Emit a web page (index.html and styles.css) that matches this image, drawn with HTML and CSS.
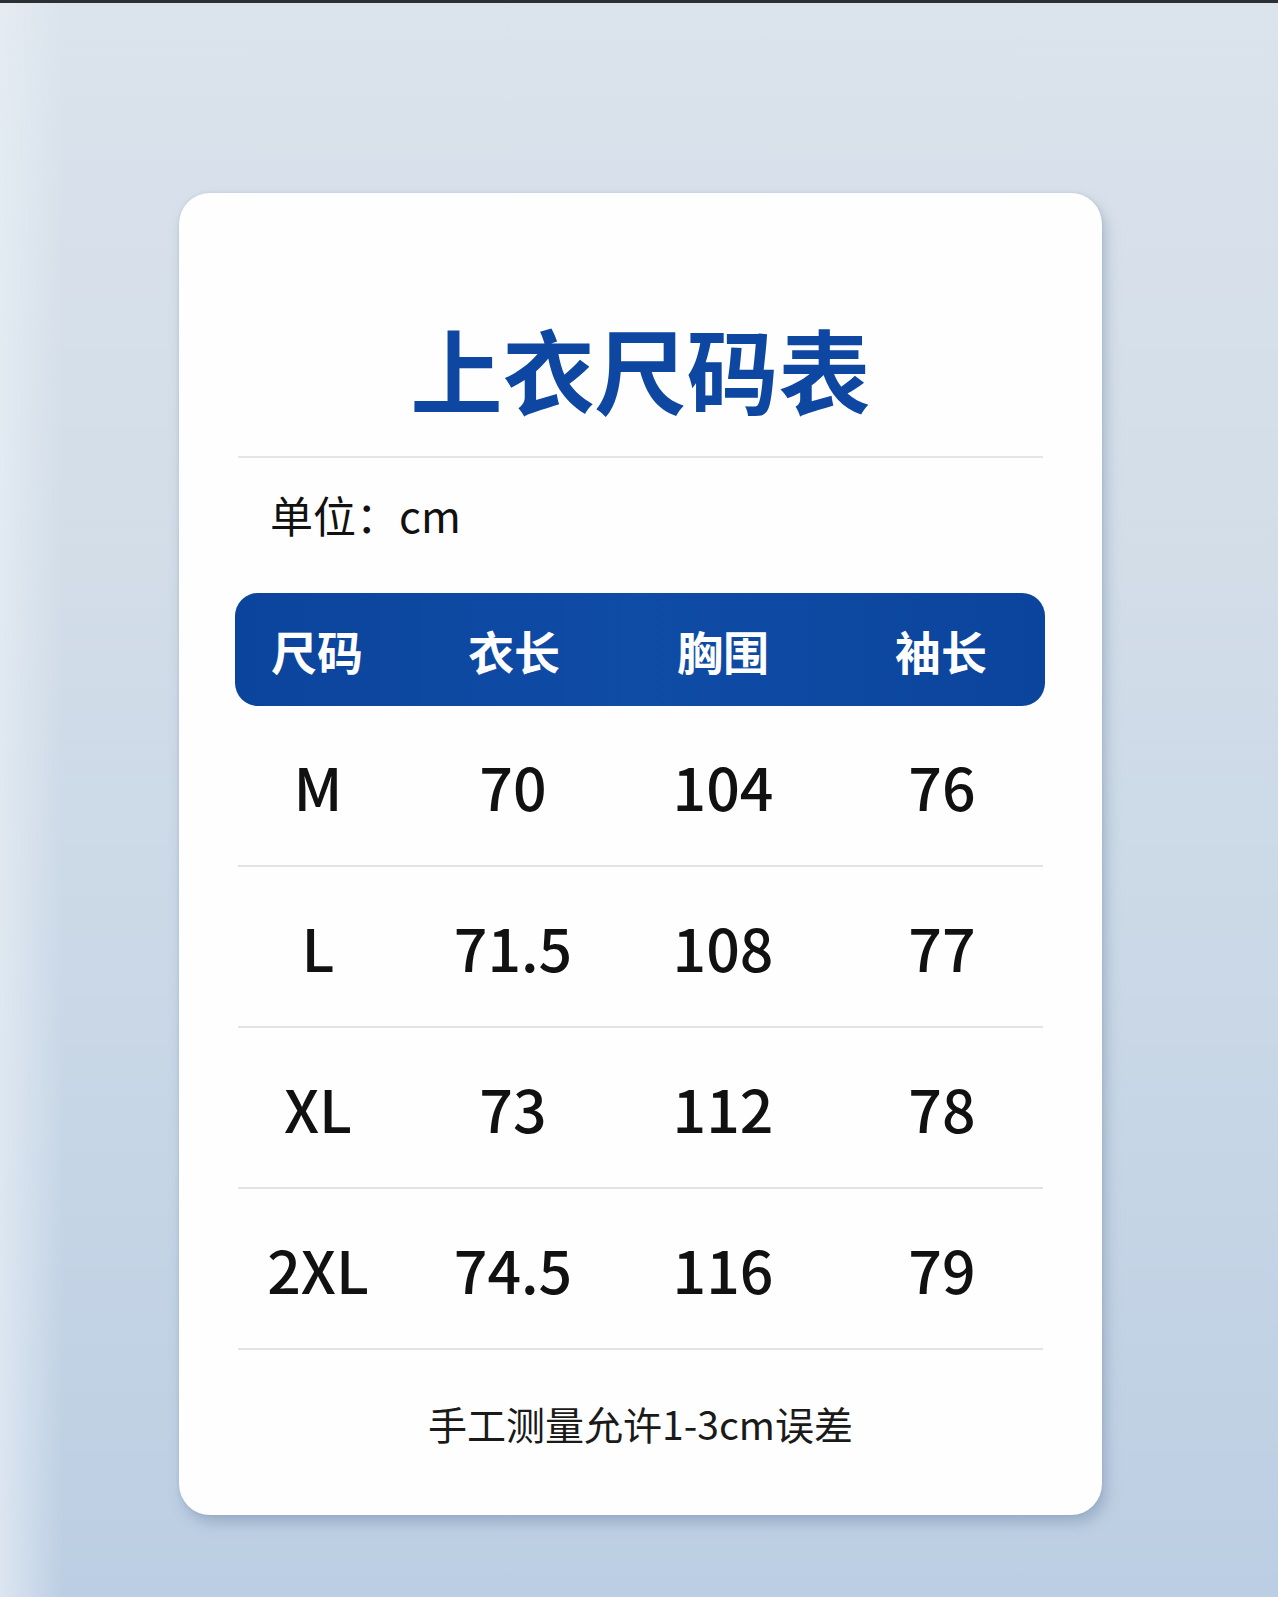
FILE: index.html
```html
<!DOCTYPE html>
<html lang="zh-CN">
<head>
<meta charset="utf-8">
<title>上衣尺码表</title>
<link rel="stylesheet" href="styles.css">
</head>
<body>
<div class="page">
  <div class="card">
    <h1 class="title">上衣尺码表</h1>
    <div class="unit">单位：cm</div>
    <div class="table">
      <div class="head">
        <span>尺码</span><span>衣长</span><span>胸围</span><span>袖长</span>
      </div>
      <div class="row"><span>M</span><span>70</span><span>104</span><span>76</span></div>
      <div class="row"><span>L</span><span>71.5</span><span>108</span><span>77</span></div>
      <div class="row"><span>XL</span><span>73</span><span>112</span><span>78</span></div>
      <div class="row"><span>2XL</span><span>74.5</span><span>116</span><span>79</span></div>
    </div>
    <div class="note">手工测量允许1-3cm误差</div>
  </div>
</div>
</body>
</html>
```
FILE: styles.css
```css
html, body {
  margin: 0;
  padding: 0;
}
body {
  width: 1278px;
  height: 1597px;
  overflow: hidden;
  font-family: "Noto Sans CJK SC", "Noto Sans", sans-serif;
  background:
    linear-gradient(90deg, rgba(232,239,246,0.7) 0%, rgba(232,239,246,0) 5%, rgba(232,239,246,0) 100%),
    linear-gradient(180deg, #dbe3ec 0%, #d2dde8 35%, #c7d6e6 70%, #bccee3 100%);
  border-top: 3px solid #2b2e33;
  box-sizing: border-box;
}
.page {
  padding-top: 190px;
  padding-left: 179px;
}
.card {
  width: 923px;
  box-sizing: border-box;
  padding: 0 59px 73px;
  background: #fefefe;
  border-radius: 31px;
  box-shadow: 4px 8px 14px rgba(90, 115, 150, 0.35), 0 0 3px rgba(120, 140, 170, 0.25);
}
.title {
  margin: 0;
  padding: 129px 0 42px;
  font-size: 92px;
  line-height: 92px;
  font-weight: 700;
  color: #0d47a1;
  text-align: center;
  border-bottom: 2px solid #e5e5e5;
}
.unit {
  margin-top: 34px;
  padding-left: 32px;
  font-size: 43px;
  line-height: 44px;
  color: #111;
}
.table {
  margin-top: 57px;
}
.head {
  margin: 0 -2px 0 -3px;
  height: 113px;
  border-radius: 23px;
  background: linear-gradient(90deg, #0b449c 0%, #0f4ca6 50%, #0b449c 100%);
  display: grid;
  grid-template-columns: 164px 230px 188px 248px;
  align-items: center;
  color: #fff;
  font-size: 46px;
  font-weight: 700;
}
.head span, .row span {
  text-align: center;
}
.row {
  height: 159px;
  border-bottom: 2px solid #e3e3e3;
  display: grid;
  grid-template-columns: 160px 230px 190px 248px;
  align-items: center;
  font-size: 59px;
  font-weight: 500;
  color: #111;
}
.row span {
  line-height: 159px;
}
.note {
  padding-top: 54px;
  font-size: 39px;
  line-height: 38px;
  color: #1a1a1a;
  text-align: center;
}
```
